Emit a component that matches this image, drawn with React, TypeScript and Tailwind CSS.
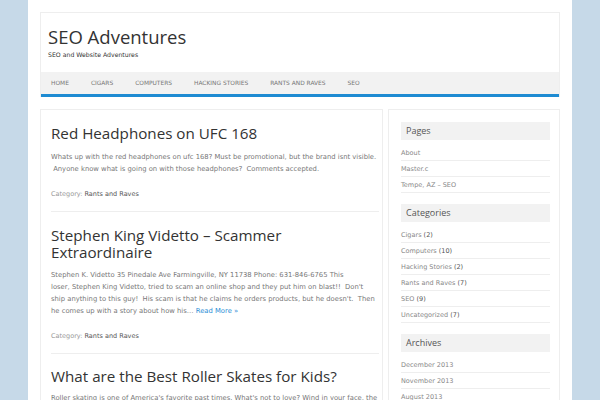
const nav = ["Home", "Cigars", "Computers", "Hacking Stories", "Rants and Raves", "SEO"];

const pages = ["About", "Master.c", "Tempe, AZ – SEO"];
const categories: [string, number][] = [
  ["Cigars", 2],
  ["Computers", 10],
  ["Hacking Stories", 2],
  ["Rants and Raves", 7],
  ["SEO", 9],
  ["Uncategorized", 7],
];
const archives = ["December 2013", "November 2013", "August 2013", "July 2013"];

const body = "font-['DejaVu_Sans',sans-serif]";
const head = "font-['Open_Sans',sans-serif]";

function Widget({ title, children }: { title: string; children: React.ReactNode }) {
  return (
    <div className="mb-[11px]">
      <div className={`${head} h-[18px] bg-[#f2f2f2] pl-[5px] text-[9px] leading-[18px] text-[#555]`}>{title}</div>
      <ul className="mt-[5px]">{children}</ul>
    </div>
  );
}

function Item({ children }: { children: React.ReactNode }) {
  return (
    <li className={`${body} h-[16px] border-b border-[#eee] text-[6.5px] leading-[16px] text-[#888]`}>{children}</li>
  );
}

function Category() {
  return (
    <p className={`${body} mt-[13px] text-[6.5px] leading-[12px] text-[#999]`}>
      Category: <span className="text-[#555]">Rants and Raves</span>
    </p>
  );
}

export default function App() {
  return (
    <div className="h-[400px] overflow-hidden bg-[#c6d9e8]">
      <div className="mx-auto h-full w-[544px] bg-white px-3 pt-3">
        {/* header */}
        <div className="border border-[#eee] border-b-0">
          <div className="h-[59px] px-[7px] pt-[14px]">
            <h1 className={`${head} text-[18.5px] leading-[20px] text-[#333]`}>SEO Adventures</h1>
            <p className={`${body} mt-[4px] text-[6.2px] leading-[8px] text-[#333]`}>SEO and Website Adventures</p>
          </div>
          <div className="flex h-[25px] gap-[22px] border-b-[3px] border-[#1e8bd2] bg-[#f2f2f2] pl-[10px]">
            {nav.map((n) => (
              <span key={n} className={`${body} text-[5.9px] uppercase leading-[22px] text-[#777]`}>
                {n}
              </span>
            ))}
          </div>
        </div>

        <div className="mt-[12px] flex gap-[5px]">
          {/* posts */}
          <div className="h-[400px] w-[343px] shrink-0 border border-[#eee] pl-[10px] pr-[3px] pt-[15px]">
            <h2 className={`${head} text-[15.2px] leading-[17px] text-[#333]`}>Red Headphones on UFC 168</h2>
            <p className={`${body} mt-[9px] text-[6.8px] leading-[12px] text-[#777]`}>
              Whats up with the red headphones on ufc 168? Must be promotional, but the brand isnt visible.
              <br />
              &nbsp;Anyone know what is going on with those headphones? &nbsp;Comments accepted.
            </p>
            <Category />
            <hr className="mt-[11px] mb-[15px] border-[#eee]" />

            <h2 className={`${head} text-[15.2px] leading-[17px] text-[#333]`}>
              Stephen King Videtto – Scammer
              <br />
              Extraordinaire
            </h2>
            <p className={`${body} mt-[8px] text-[6.8px] leading-[12px] text-[#777]`}>
              Stephen K. Videtto 35 Pinedale Ave Farmingville, NY 11738 Phone: 631-846-6765 This
              <br />
              loser, Stephen King Videtto, tried to scam an online shop and they put him on blast!! &nbsp;Don't
              <br />
              ship anything to this guy! &nbsp;His scam is that he claims he orders products, but he doesn't. &nbsp;Then
              <br />
              he comes up with a story about how his… <span className="text-[#2a8ed6]">Read More »</span>
            </p>
            <Category />
            <hr className="mt-[11px] mb-[14px] border-[#eee]" />

            <h2 className={`${head} text-[15.2px] leading-[17px] text-[#333]`}>What are the Best Roller Skates for Kids?</h2>
            <p className={`${body} mt-[7px] text-[6.8px] leading-[12px] text-[#777]`}>
              Roller skating is one of America's favorite past times. What's not to love? Wind in your face, the
              sound of the wheels on the pavement.
            </p>
          </div>

          {/* sidebar */}
          <div className="h-[400px] flex-1 border border-[#eee] pl-[12px] pr-[9px] pt-[12px]">
            <Widget title="Pages">
              {pages.map((p) => (
                <Item key={p}>{p}</Item>
              ))}
            </Widget>
            <Widget title="Categories">
              {categories.map(([c, n]) => (
                <Item key={c}>
                  {c} <span className="text-[#555]">({n})</span>
                </Item>
              ))}
            </Widget>
            <Widget title="Archives">
              {archives.map((a) => (
                <Item key={a}>{a}</Item>
              ))}
            </Widget>
          </div>
        </div>
      </div>
    </div>
  );
}
